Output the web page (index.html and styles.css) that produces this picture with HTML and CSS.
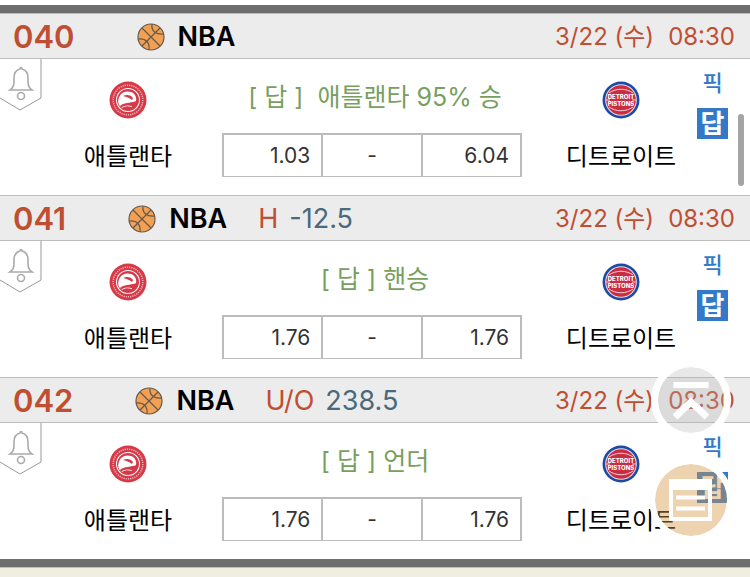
FILE: index.html
```
<!DOCTYPE html>
<html lang="ko">
  <head>
    <meta charset="UTF-8" />
    <meta name="viewport" content="width=device-width, initial-scale=1" />
    <title>NBA</title>
    <link rel="stylesheet" href="styles.css">
  </head>
  <body>
    <svg width="0" height="0" class="sprite">
      <symbol id="ball" viewBox="0 0 28 28">
        <circle cx="14" cy="14" r="13" fill="#f2a154" />
        <g fill="none" stroke="#66594b" stroke-width="1.2">
          <circle cx="14" cy="14" r="13" />
          <path d="M5 5 23 23M23 5 5 23" />
          <path d="M15 1c-1 7 4 11 12 10M1 16c8-1 12 4 11 11" />
        </g>
      </symbol>
      <symbol id="bell" viewBox="0 0 42 52">
        <path d="M0 39 20 51 41 39V0" fill="none" stroke="#999" />
        <g fill="none" stroke="#aaa" stroke-width="1.6">
          <path d="M10 31c3-2 4-4 4-8v-4c0-5 2-8 6-9 0-2 2-2 2 0 4 1 6 4 6 9v4c0 4 1 6 4 8z" />
          <circle cx="21" cy="37" r="3.5" />
        </g>
      </symbol>
      <symbol id="hawks" viewBox="0 0 38 38">
        <circle cx="19" cy="19" r="18.5" fill="#d63a48" />
        <circle cx="19" cy="19" r="14.800" fill="none" stroke="#f0b4ba" stroke-width="1.5" stroke-dasharray="1.2 1" />
        <circle cx="19" cy="19" r="12" fill="#fff" />
        <circle cx="19" cy="19" r="11" fill="#d63a48" />
        <path d="M9.500 18C11 12 16 9 22 11c4 1 6 6 5 9-1 3-4 4-8 4 3 0 4 1 4 2-4-1-7-1-10 1-3-2-4.500-5-3.500-9z" fill="#fff" />
        <path d="M14 15c4-2 8-1 10 2l-1 2c-2-2-5-3-9-4zM11 25c3-3 8-3 13-4 2 0 4-1 5-3 0 4-3 7-7 7-5-1-8 0-10 2z" fill="#d63a48" />
      </symbol>
      <symbol id="pistons" viewBox="0 0 38 38">
        <circle cx="19" cy="19" r="18.500" fill="#1e4aa5" />
        <circle cx="19" cy="19" r="15.800" fill="#dfe3ee" />
        <circle cx="19" cy="19" r="14.800" fill="#cb2c42" />
        <g fill="none" stroke="#f3d3d8" stroke-width="1">
          <path d="M7 12c7-5 17-5 24 0M7 26c7 5 17 5 24 0M4 19h4M30 19h4" />
        </g>
        <text class="logo-word" x="19" y="17.500">DETROIT</text>
        <text class="logo-word" x="19" y="25">PISTONS</text>
      </symbol>
    </svg>

    <main class="board">
      <section class="match">
        <header class="match-head">
          <strong class="match-no">040</strong>
          <svg class="ball"><use href="#ball" /></svg>
          <b class="league">NBA</b>
          <time class="date">3/22 (수)</time>
          <time class="hour">08:30</time>
        </header>
        <div class="match-body">
          <button class="alarm" aria-label="알림"><svg><use href="#bell" /></svg></button>
          <div class="team home">
            <svg class="logo"><use href="#hawks" /></svg>
            <span>애틀랜타</span>
          </div>
          <div class="center">
            <p class="answer">[ 답 ]&nbsp; 애틀랜타 95% 승</p>
            <table class="odds">
              <tr><td>1.03</td><td class="draw">-</td><td>6.04</td></tr>
            </table>
          </div>
          <div class="team away">
            <svg class="logo"><use href="#pistons" /></svg>
            <span>디트로이트</span>
          </div>
          <div class="picks">
            <a class="pick" href="#">픽</a>
            <a class="reply" href="#">답</a>
          </div>
        </div>
      </section>

      <section class="match">
        <header class="match-head">
          <strong class="match-no">041</strong>
          <svg class="ball"><use href="#ball" /></svg>
          <b class="league">NBA</b>
          <span class="kind">H</span>
          <span class="line">-12.5</span>
          <time class="date">3/22 (수)</time>
          <time class="hour">08:30</time>
        </header>
        <div class="match-body">
          <button class="alarm" aria-label="알림"><svg><use href="#bell" /></svg></button>
          <div class="team home">
            <svg class="logo"><use href="#hawks" /></svg>
            <span>애틀랜타</span>
          </div>
          <div class="center">
            <p class="answer">[ 답 ] 핸승</p>
            <table class="odds">
              <tr><td>1.76</td><td class="draw">-</td><td>1.76</td></tr>
            </table>
          </div>
          <div class="team away">
            <svg class="logo"><use href="#pistons" /></svg>
            <span>디트로이트</span>
          </div>
          <div class="picks">
            <a class="pick" href="#">픽</a>
            <a class="reply" href="#">답</a>
          </div>
        </div>
      </section>

      <section class="match">
        <header class="match-head">
          <strong class="match-no">042</strong>
          <svg class="ball"><use href="#ball" /></svg>
          <b class="league">NBA</b>
          <span class="kind">U/O</span>
          <span class="line">238.5</span>
          <time class="date">3/22 (수)</time>
          <time class="hour">08:30</time>
        </header>
        <div class="match-body">
          <button class="alarm" aria-label="알림"><svg><use href="#bell" /></svg></button>
          <div class="team home">
            <svg class="logo"><use href="#hawks" /></svg>
            <span>애틀랜타</span>
          </div>
          <div class="center">
            <p class="answer">[ 답 ] 언더</p>
            <table class="odds">
              <tr><td>1.76</td><td class="draw">-</td><td>1.76</td></tr>
            </table>
          </div>
          <div class="team away">
            <svg class="logo"><use href="#pistons" /></svg>
            <span>디트로이트</span>
          </div>
          <div class="picks">
            <a class="pick" href="#">픽</a>
            <a class="reply" href="#">답</a>
          </div>
        </div>
      </section>

      <section class="match group-next">
        <header class="match-head">
          <svg class="ball"><use href="#ball" /></svg>
        </header>
      </section>
    </main>

    <i class="scroll-thumb"></i>
    <nav class="float">
      <button class="float-top" aria-label="맨 위로">
        <svg viewBox="0 0 66 66">
          <path d="M15.500 18h35" fill="none" stroke="#fff" stroke-width="6" />
          <path d="M17 50 33 35l16 15" fill="none" stroke="#fff" stroke-width="7" />
        </svg>
      </button>
      <button class="float-list" aria-label="목록">
        <svg viewBox="0 0 72 72">
          <path d="M14 15h43v42H14zM18 26v27h35V26z" fill="#fff" fill-rule="evenodd" />
          <path d="M21 33.500h29M21 44.500h29" fill="none" stroke="#fff" stroke-width="4" />
        </svg>
      </button>
    </nav>
  </body>
</html>
```
FILE: styles.css
```
* {
  box-sizing: border-box;
}
body {
  margin: 0;
  background: #fff;
  color: #000;
  font-family: Inter, "Noto Sans CJK KR", sans-serif;
}
button {
  padding: 0;
  border: 0;
  background: none;
  cursor: pointer;
}
svg {
  display: block;
}
.sprite {
  position: absolute;
}
.board {
  height: 100vh;
  padding-top: 5px;
  overflow: hidden;
}

/* 경기 묶음 사이의 굵은 줄 */
.match:first-child,
.group-next {
  border-top: 8px solid #6e6e6e;
}

.match-head {
  display: flex;
  align-items: center;
  height: 46px;
  padding: 1px 15px 0 13px;
  border: solid #bdbdbd;
  border-width: 1px 0;
  background: #ececec;
  font-size: 27px;
  line-height: 32px;
  white-space: nowrap;
}
.match-no {
  margin-right: 62px;
  color: #c04e32;
  font-size: 31px;
  font-weight: 600;
}
.ball {
  width: 28px;
  height: 28px;
  margin-right: 13px;
}
.league {
  font-weight: 600;
}
.kind {
  margin-left: 31px;
  color: #c04e32;
}
.line {
  margin-left: 11px;
  color: #49697c;
}
.date,
.hour {
  color: #c04e32;
  font-size: 24px;
}
.date {
  margin-left: auto;
}
.hour {
  margin-left: 14px;
}
.group-next .match-head {
  padding-left: 135px;
  background: #f0eee1;
}

.match-body {
  display: grid;
  grid-template-columns: 42px 180fr 300px 175fr 53px;
  height: 136px;
}
.alarm {
  align-self: start;
}
.alarm svg {
  width: 42px;
  height: 52px;
}
.team {
  display: flex;
  flex-direction: column;
  align-items: center;
  padding-top: 22px;
  font-size: 24px;
  line-height: 28px;
  white-space: nowrap;
}
.home {
  padding-right: 8px;
}
.away {
  padding-left: 23px;
}
.logo {
  width: 38px;
  height: 38px;
  margin-bottom: 24px;
}
.logo-word {
  fill: #fff;
  font-size: 6px;
  font-weight: 800;
  text-anchor: middle;
}
.answer {
  margin: 20px 0 18px;
  padding-left: 6px;
  color: #789f5e;
  font-size: 25px;
  line-height: 36px;
  text-align: center;
  white-space: nowrap;
}
.odds {
  width: 100%;
  height: 44px;
  border: solid #bcbcbc;
  border-width: 2px 0 1px 2px;
  border-spacing: 0;
  table-layout: fixed;
  color: #333;
  font-size: 21px;
  line-height: 24px;
}
.odds td {
  padding: 0 11px 0 0;
  border-right: 2px solid #bcbcbc;
  text-align: right;
}
.odds .draw {
  padding: 0;
  text-align: center;
}
.picks {
  display: flex;
  flex-direction: column;
  gap: 11px;
  width: 31px;
  padding-top: 10px;
  font-size: 22px;
  line-height: 28px;
  text-align: center;
}
.picks a {
  color: #3379c7;
  font-weight: 500;
  text-decoration: none;
}
.picks .reply {
  background: #3379c7;
  color: #fff;
  font-size: 26px;
  font-weight: 700;
  line-height: 31px;
}

/* 화면 위에 떠 있는 요소 */
.scroll-thumb {
  position: fixed;
  top: 114px;
  right: 6px;
  width: 6px;
  height: 72px;
  border-radius: 3px;
  background: #a4a4a4;
}
.float {
  position: fixed;
  right: 17px;
  bottom: 35px;
  display: flex;
  flex-direction: column;
  align-items: center;
  gap: 18px;
}
.float button {
  width: 80px;
  height: 80px;
  border: 7px solid #fff;
  border-radius: 50%;
  background-clip: padding-box;
}
.float .float-top {
  background-color: rgba(178, 178, 178, 0.3);
}
.float .float-list {
  width: 84px;
  height: 84px;
  border-width: 6px;
  background-color: rgba(214, 150, 70, 0.42);
}
```
